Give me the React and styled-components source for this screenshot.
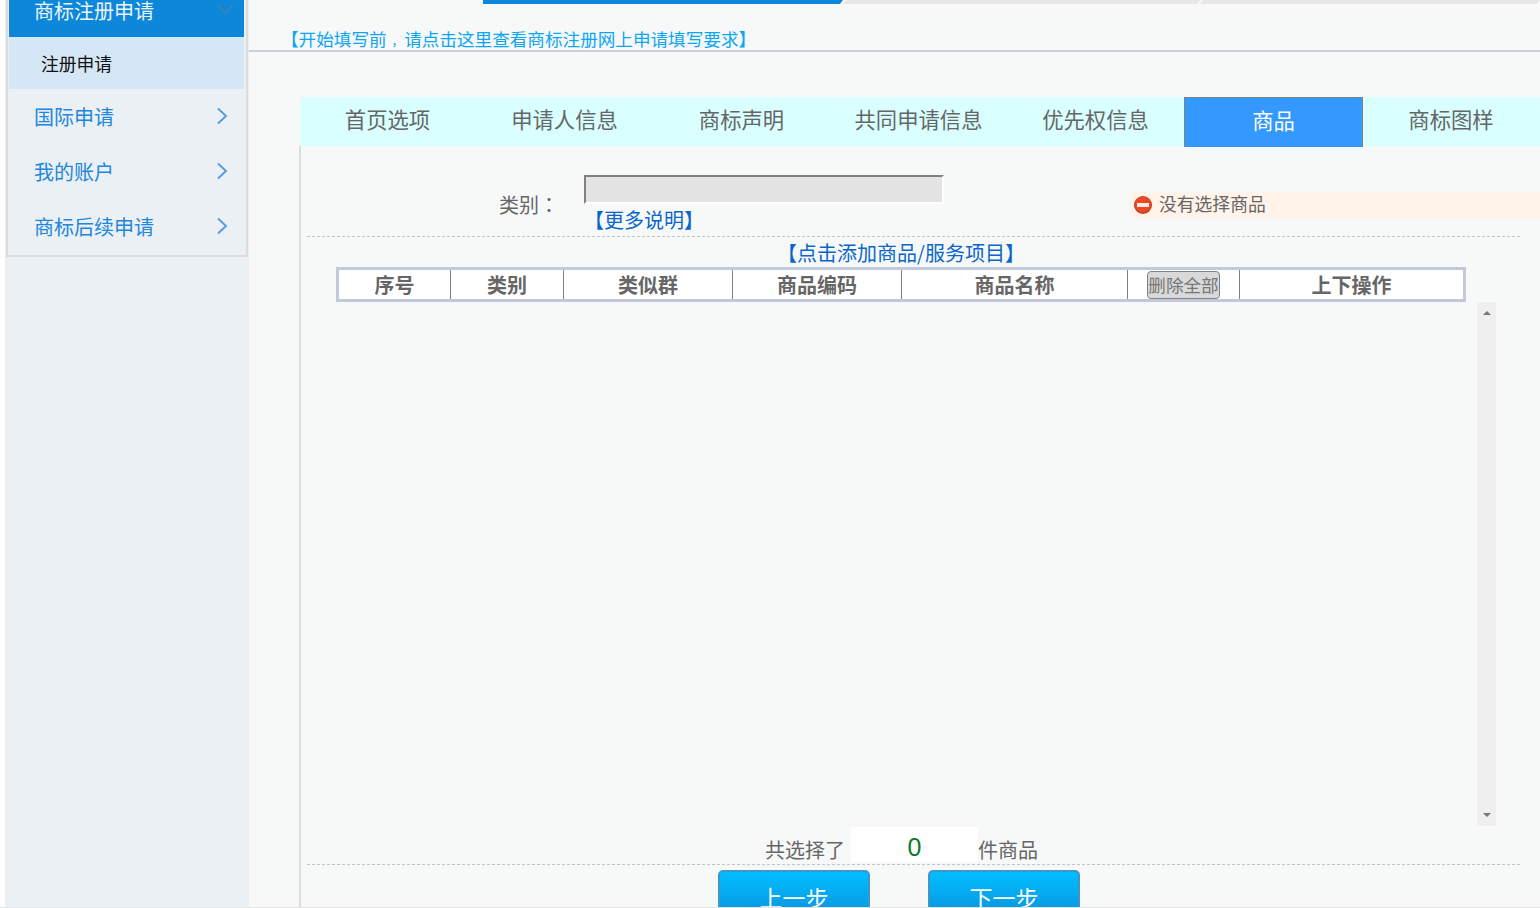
import React from 'react';
import styled, {createGlobalStyle} from 'styled-components';

const GlobalStyle = createGlobalStyle`
  html, body {
    margin: 0;
    padding: 0;
    background: #fff;
    font-family: "Noto Sans CJK SC", "Liberation Sans", sans-serif;
  }
`;

const Page = styled.div`
  display: flex;
  box-sizing: border-box;
  width: 1540px;
  height: 908px;
  padding-left: 5px;
  border-bottom: 1px solid #e4e4e4;
  overflow: hidden;
`;

const Sidebar = styled.aside`
  width: 244px;
  flex: none;
  background: #ebf0f5;
`;

const Menu = styled.nav`
  box-sizing: border-box;
  width: 242px;
  height: 257px;
  margin-left: 1px;
  padding: 0 2px 0 1px;
  border: solid #dcdcdc;
  border-width: 0 2px 2px;
`;

const MenuHead = styled.div`
  display: flex;
  justify-content: space-between;
  box-sizing: border-box;
  height: 37px;
  padding: 0 11px 0 25px;
  font-size: 20px;
  line-height: 21px;
  color: #e8f3fb;
  background: #0d87da;
`;

const SubItem = styled.div`
  box-sizing: border-box;
  height: 52px;
  padding-left: 32px;
  font-size: 17.8px;
  line-height: 52px;
  color: #111;
  background: #d5e7f4;
`;

const MenuItem = styled.div`
  display: flex;
  align-items: center;
  justify-content: space-between;
  height: 55px;
  padding: 0 16px 0 25px;
  font-size: 20px;
  color: #2187dc;
`;

const Main = styled.main`
  flex: 1;
  min-width: 0;
  background: #f7f9f8;
`;

const Steps = styled.div`
  display: flex;
  height: 4px;
  padding-left: 234px;
`;

const Step = styled.div`
  flex: none;
  width: ${props => `${props.width}px`};
  background: ${props => props.active ? '#0d87da' : '#e6e6e6'};
  clip-path: ${props => props.active
    ? 'polygon(0 0, 100% 0, calc(100% - 3px) 100%, 0 100%)'
    : 'polygon(3px 0, 100% 0, calc(100% - 3px) 100%, 0 100%)'};
`;

const Notice = styled.div`
  box-sizing: border-box;
  height: 48px;
  padding: 23px 0 0 32px;
  font-size: 17.6px;
  line-height: 24px;
  color: #0ca6f2;
  border-bottom: 2px solid #c9cee0;
`;

const Comma = styled.span`
  padding: 0 0.6px 0 5px;
  font-size: 12px;
`;

const Tabs = styled.div`
  display: flex;
  height: 49px;
  margin: 45px 0 0 51px;
  background: #d9ffff;
`;

const Tab = styled.div`
  position: relative;
  flex: none;
  box-sizing: border-box;
  width: ${props => props.active ? '179px' : '177px'};
  height: ${props => props.active ? '50px' : '47px'};
  margin: ${props => props.active ? '0 -1px' : '0'};
  padding-right: ${props => props.active ? '0' : '2px'};
  font-size: 21.33px;
  line-height: 43px;
  text-align: center;
  color: ${props => props.active ? '#fff' : '#666'};
  background: ${props => props.active ? '#3399ff' : 'transparent'};
  border: ${props => props.active ? 'solid #808080' : 'none'};
  border-width: 1px 1px 0;

  &:last-child {
    padding: 0 0 0 1px;
  }
`;

const Panel = styled.section`
  height: 762px;
  margin-left: 50px;
  border-left: 2px solid #dddddd;
`;

const FormRow = styled.div`
  display: flex;
  align-items: flex-start;
  height: 90px;
`;

const Label = styled.div`
  width: 85px;
  margin: 45px 0 0 198px;
  font-size: 20px;
  line-height: 28px;
  color: #666;
`;

const Colon = styled.span`
  font-family: "Noto Sans CJK TC", sans-serif;
`;

const Field = styled.div`
  margin-top: 29px;
`;

const CategoryInput = styled.div`
  box-sizing: border-box;
  width: 360px;
  height: 29px;
  background: #e3e3e3;
  border: 2px solid;
  border-color: #808080 #fff #fff #808080;
`;

const MoreLink = styled.a`
  display: block;
  margin-top: 4px;
  font-size: 20px;
  line-height: 24px;
  color: #0a66cc;
`;

const Warning = styled.div`
  display: flex;
  align-items: center;
  gap: 7px;
  box-sizing: border-box;
  width: 410px;
  height: 26px;
  margin: 46px 0 0 auto;
  padding: 0 0 4px 4px;
  font-size: 17.8px;
  color: #666;
  background: #fff3ea;
`;

const Divider = styled.hr`
  width: 1213px;
  height: 0;
  margin: 0 0 0 6px;
  border: 0;
  border-top: 1px dashed #c4c4c4;
`;

const ListBlock = styled.div`
  width: 1130px;
  margin-left: 35px;
`;

const AddLink = styled.a`
  display: block;
  height: 30px;
  font-size: 20px;
  line-height: 31px;
  text-align: center;
  color: #0a66cc;
`;

const Table = styled.div`
  display: grid;
  grid-template-columns: 112px 113px 169px 169px 226px 112px 223px;
  box-sizing: border-box;
  height: 35px;
  background: #fff;
  border: 3px solid #c3c9dc;
`;

const Head = styled.div`
  display: flex;
  align-items: center;
  justify-content: center;
  font-size: 20px;
  font-weight: 700;
  color: #666;
  border-right: ${props => props.last ? 'none' : '1px solid #808080'};
`;

const DeleteButton = styled.button`
  box-sizing: border-box;
  width: 73px;
  height: 28px;
  padding: 0;
  font-family: inherit;
  font-size: 17.6px;
  line-height: 24px;
  white-space: nowrap;
  color: #777;
  background: #d9d9d9;
  border: 1px solid #808080;
  border-radius: 4px;
`;

const Scrollbar = styled.div`
  display: flex;
  flex-direction: column;
  align-items: center;
  justify-content: space-between;
  box-sizing: border-box;
  width: 19px;
  height: 524px;
  margin-left: 1176px;
  padding: 9px 0;
  background: #efefef;
`;

const Arrow = styled.span`
  width: 0;
  height: 0;
  border: 4px solid transparent;
  border-top: 0;
  border-bottom: 4px solid #777;
  transform: ${props => props.down ? 'rotate(180deg)' : 'none'};
`;

const CountRow = styled.div`
  display: flex;
  align-items: flex-end;
  height: 38px;
  padding-left: 464px;
  font-size: 20px;
  line-height: 28px;
  color: #666;
`;

const CountValue = styled.div`
  width: 127px;
  height: 35px;
  margin: 0 0 2px 6px;
  font-family: "Liberation Sans", sans-serif;
  font-size: 25px;
  line-height: 41px;
  text-align: center;
  color: #0a7a2a;
  background: #fff;
`;

const Actions = styled.div`
  display: flex;
  gap: 58px;
  margin: 5px 0 0 417px;
`;

const StepButton = styled.button`
  box-sizing: border-box;
  width: 152px;
  height: 54px;
  padding: 0;
  font-family: inherit;
  font-size: 23px;
  line-height: 50px;
  color: #fff;
  background: linear-gradient(#00beff, #0a8ed9);
  border: 2px solid #3f97c9;
  border-radius: 5px;
`;

const RightChevron = () => (
  <svg width="12" height="18" viewBox="0 0 12 18" fill="none" style={{marginTop: -2}}>
    <path d="M2 1.5 L10 9 L2 16.5" stroke="#5b9be0" strokeWidth="2" />
  </svg>
);

const DownChevron = () => (
  <svg width="16" height="9" viewBox="0 0 16 9" fill="none" style={{marginTop: 5}}>
    <path d="M0.5 0.5 L8 8 L15.5 0.5" stroke="#5a7fa8" strokeWidth="1.2" />
  </svg>
);

const StopIcon = () => (
  <svg width="18" height="18" viewBox="0 0 18 18" style={{marginTop: 4}}>
    <circle cx="9" cy="9" r="9" fill="#b8431c" />
    <circle cx="9" cy="8.5" r="8" fill="#ec4a26" />
    <rect x="3" y="7" width="12" height="4" fill="#fbe9e3" />
  </svg>
);

const tabs = ['首页选项', '申请人信息', '商标声明', '共同申请信息', '优先权信息', '商品', '商标图样'];
const columns = ['序号', '类别', '类似群', '商品编码', '商品名称'];

export default function App() {
  return (
    <Page>
      <GlobalStyle />
      <Sidebar>
        <Menu>
          <MenuHead>商标注册申请<DownChevron /></MenuHead>
          <SubItem>注册申请</SubItem>
          <MenuItem>国际申请<RightChevron /></MenuItem>
          <MenuItem>我的账户<RightChevron /></MenuItem>
          <MenuItem>商标后续申请<RightChevron /></MenuItem>
        </Menu>
      </Sidebar>
      <Main>
        <Steps>
          <Step active width={360} />
          <Step width={357} />
          <Step width={340} />
        </Steps>
        <Notice>【开始填写前<Comma>，</Comma>请点击这里查看商标注册网上申请填写要求】</Notice>
        <Tabs>
          {tabs.map(tab => <Tab key={tab} active={tab === '商品'}>{tab}</Tab>)}
        </Tabs>
        <Panel>
          <FormRow>
            <Label>类别<Colon>：</Colon></Label>
            <Field>
              <CategoryInput />
              <MoreLink>【更多说明】</MoreLink>
            </Field>
            <Warning><StopIcon />没有选择商品</Warning>
          </FormRow>
          <Divider />
          <ListBlock>
            <AddLink>【点击添加商品/服务项目】</AddLink>
            <Table>
              {columns.map(col => <Head key={col}>{col}</Head>)}
              <Head><DeleteButton>删除全部</DeleteButton></Head>
              <Head last>上下操作</Head>
            </Table>
          </ListBlock>
          <Scrollbar>
            <Arrow />
            <Arrow down />
          </Scrollbar>
          <CountRow>
            共选择了<CountValue>0</CountValue>件商品
          </CountRow>
          <Divider />
          <Actions>
            <StepButton>上一步</StepButton>
            <StepButton>下一步</StepButton>
          </Actions>
        </Panel>
      </Main>
    </Page>
  );
}
